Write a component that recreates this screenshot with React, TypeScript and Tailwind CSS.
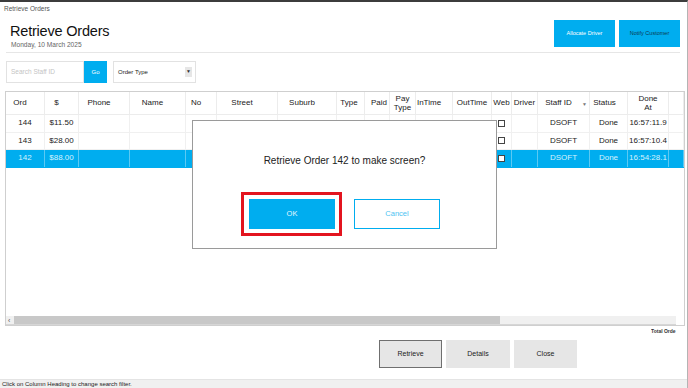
import React from "react";

type Col = { h: React.ReactNode; hc: string };

const cols: Col[] = [
  { h: "Ord", hc: "pr-[10px]" },
  { h: "$", hc: "pr-[10px]" },
  { h: "Phone", hc: "pr-[10px]" },
  { h: "Name", hc: "pr-[10px]" },
  { h: "No", hc: "pr-[10px]" },
  { h: "Street", hc: "pr-[10px]" },
  { h: "Suburb", hc: "pr-[10px]" },
  { h: "Type", hc: "pr-[3px]" },
  { h: "Paid", hc: "pl-[4px]" },
  { h: <span className="text-center leading-[9px]">Pay<br />Type</span>, hc: "" },
  { h: "InTime", hc: "pr-[10px]" },
  { h: "OutTime", hc: "" },
  { h: "Web", hc: "" },
  { h: "Driver", hc: "" },
  { h: "Staff ID", hc: "pr-[10px]" },
  { h: "Status", hc: "pr-[8px]" },
  { h: <span className="text-center leading-[9px]">Done<br />At</span>, hc: "" },
  { h: "", hc: "" },
];

const rows = [
  { ord: "144", amt: "$11.50", time: "16:57:11.9", sel: false },
  { ord: "143", amt: "$28.00", time: "16:57:10.4", sel: false },
  { ord: "142", amt: "$88.00", time: "16:54:28.1", sel: true },
];

const gridCols =
  "grid grid-cols-[39px_34px_51px_56px_31px_61px_59px_28px_25px_26px_37px_39px_20px_26px_52px_38px_41px_1fr]";

function Check() {
  return <div className="w-[7px] h-[7px] border border-[#444] bg-white" />;
}

export default function App() {
  return (
    <div className="relative w-[688px] h-[388px] overflow-hidden bg-white border-t-2 border-r border-t-[#3c3c3c] border-r-[#b4b4b4] font-['Liberation_Sans',Arial,sans-serif] flex flex-col text-[#222]">
      {/* window title */}
      <div className="h-[13px] pl-[4px] flex items-center text-[6.5px] text-[#555]">Retrieve Orders</div>

      {/* header */}
      <div className="h-[37px] flex justify-between">
        <div className="pl-[10px] pt-[6px]">
          <div className="text-[14.5px] leading-[20px] tracking-[-0.2px] text-[#111]">Retrieve Orders</div>
          <div className="text-[6.6px] leading-[8px] text-[#666] ml-[1px]">Monday, 10 March 2025</div>
        </div>
        <div className="flex gap-[4px] pr-[7px] pt-[5px]">
          <div className="w-[61px] h-[27px] bg-[#00adef] flex items-center justify-center text-[5.5px] text-white">Allocate Driver</div>
          <div className="w-[61px] h-[27px] bg-[#00adef] flex items-center justify-center text-[5.5px] text-[#0b3a52]">Notify Customer</div>
        </div>
      </div>
      <div className="mx-[6px] w-[674px] h-px bg-[#e6e6e6]" />

      {/* filter row */}
      <div className="mt-[8px] pl-[6px] flex">
        <div className="w-[78px] h-[22px] border border-[#e2e2e2] flex items-center pl-[4px] text-[6.5px] text-[#c4c4c4]">Search Staff ID</div>
        <div className="w-[23px] h-[22px] bg-[#00adef] flex items-center justify-center text-[6px] text-white">Go</div>
        <div className="ml-[6px] w-[83px] h-[22px] border border-[#e2e2e2] flex items-center justify-between pl-[4px] pr-[3px] text-[6px] text-[#222]">
          <span>Order Type</span>
          <span className="w-[7px] h-[10px] bg-[#e6e6e6] flex items-center justify-center text-[5px] text-[#333]">▼</span>
        </div>
      </div>

      {/* table */}
      <div className="mt-[8px] ml-[5px] w-[680px] h-[235px] border border-[#cfcfcf] flex flex-col">
        <div className={`${gridCols} h-[23px] border-b border-[#ececec]`}>
          {cols.map((c, i) => (
            <div key={i} className={`relative flex items-center justify-center border-r border-[#ececec] text-[8px] text-[#222] ${c.hc}`}>
              {c.h}
              {i === 14 && <span className="absolute right-[2px] top-[9px] text-[5px] text-[#777]">▼</span>}
            </div>
          ))}
        </div>
        {rows.map((r) => (
          <div key={r.ord} className={`${gridCols} h-[17.5px] border-b ${r.sel ? "bg-[#00adef] border-[#00adef] text-[#d6f1fd]" : "border-[#f0f0f0] text-[#222]"}`}>
            {cols.map((_, i) => {
              let content: React.ReactNode = null;
              if (i === 0) content = r.ord;
              if (i === 1) content = r.amt;
              if (i === 8) content = <Check />;
              if (i === 12) content = <Check />;
              if (i === 14) content = "DSOFT";
              if (i === 15) content = "Done";
              if (i === 16) content = r.time;
              return (
                <div key={i} className={`flex items-center justify-center text-[8px] border-r ${r.sel ? "border-[#5cc9f3]" : "border-[#f0f0f0]"}`}>
                  {content}
                </div>
              );
            })}
          </div>
        ))}
        <div className="flex-1" />
        <div className="h-[9px] w-[670px] flex items-center border-b border-[#d6d6d6] bg-[#f0f0f0]">
          <span className="w-[8px] pl-[2px] text-[7px] leading-none text-[#555]">‹</span>
          <div className="w-[486px] h-[8px] bg-[#c8c8c8]" />
        </div>
      </div>

      {/* total */}
      <div className="h-[11px] flex justify-end pr-[11px]">
        <div className="w-[25px] overflow-hidden whitespace-nowrap text-[5px] font-bold text-[#333] pt-[2px]">Total Orde</div>
      </div>

      {/* bottom buttons */}
      <div className="mt-[3px] pl-[379px] flex gap-[4px]">
        <div className="w-[63px] h-[28px] bg-[#e6e6e6] border border-[#6f6f6f] flex items-center justify-center text-[7px] text-[#222]">Retrieve</div>
        <div className="w-[64px] h-[28px] bg-[#e6e6e6] flex items-center justify-center text-[7px] text-[#222]">Details</div>
        <div className="w-[63px] h-[28px] bg-[#e6e6e6] flex items-center justify-center text-[7px] text-[#222]">Close</div>
      </div>

      <div className="flex-1" />
      <div className="h-[9px] bg-[#f0f0f0] border-t border-[#e4e4e4] pl-[2px] flex items-center text-[6px] text-[#222]">
        Click on Column Heading to change search filter.
      </div>

      {/* dialog */}
      <div className="absolute left-[192px] top-[118px] w-[305px] h-[129px] bg-white border border-[#9a9a9a] flex flex-col items-center">
        <div className="mt-[34px] text-[10px] leading-[12px] text-[#222]">Retrieve Order 142 to make screen?</div>
        <div className="mt-[32px] flex gap-[19px]">
          <div className="relative w-[86px] h-[30px] bg-[#00adef] flex items-center justify-center text-[7.5px] text-[#e6f7fe]">
            OK
            <div className="absolute -left-[8px] -top-[7px] -right-[7px] -bottom-[7px] border-[3px] border-[#e3141f]" />
          </div>
          <div className="w-[86px] h-[30px] bg-white border border-[#00adef] flex items-center justify-center text-[7.5px] text-[#4cc3f2]">Cancel</div>
        </div>
      </div>
    </div>
  );
}
